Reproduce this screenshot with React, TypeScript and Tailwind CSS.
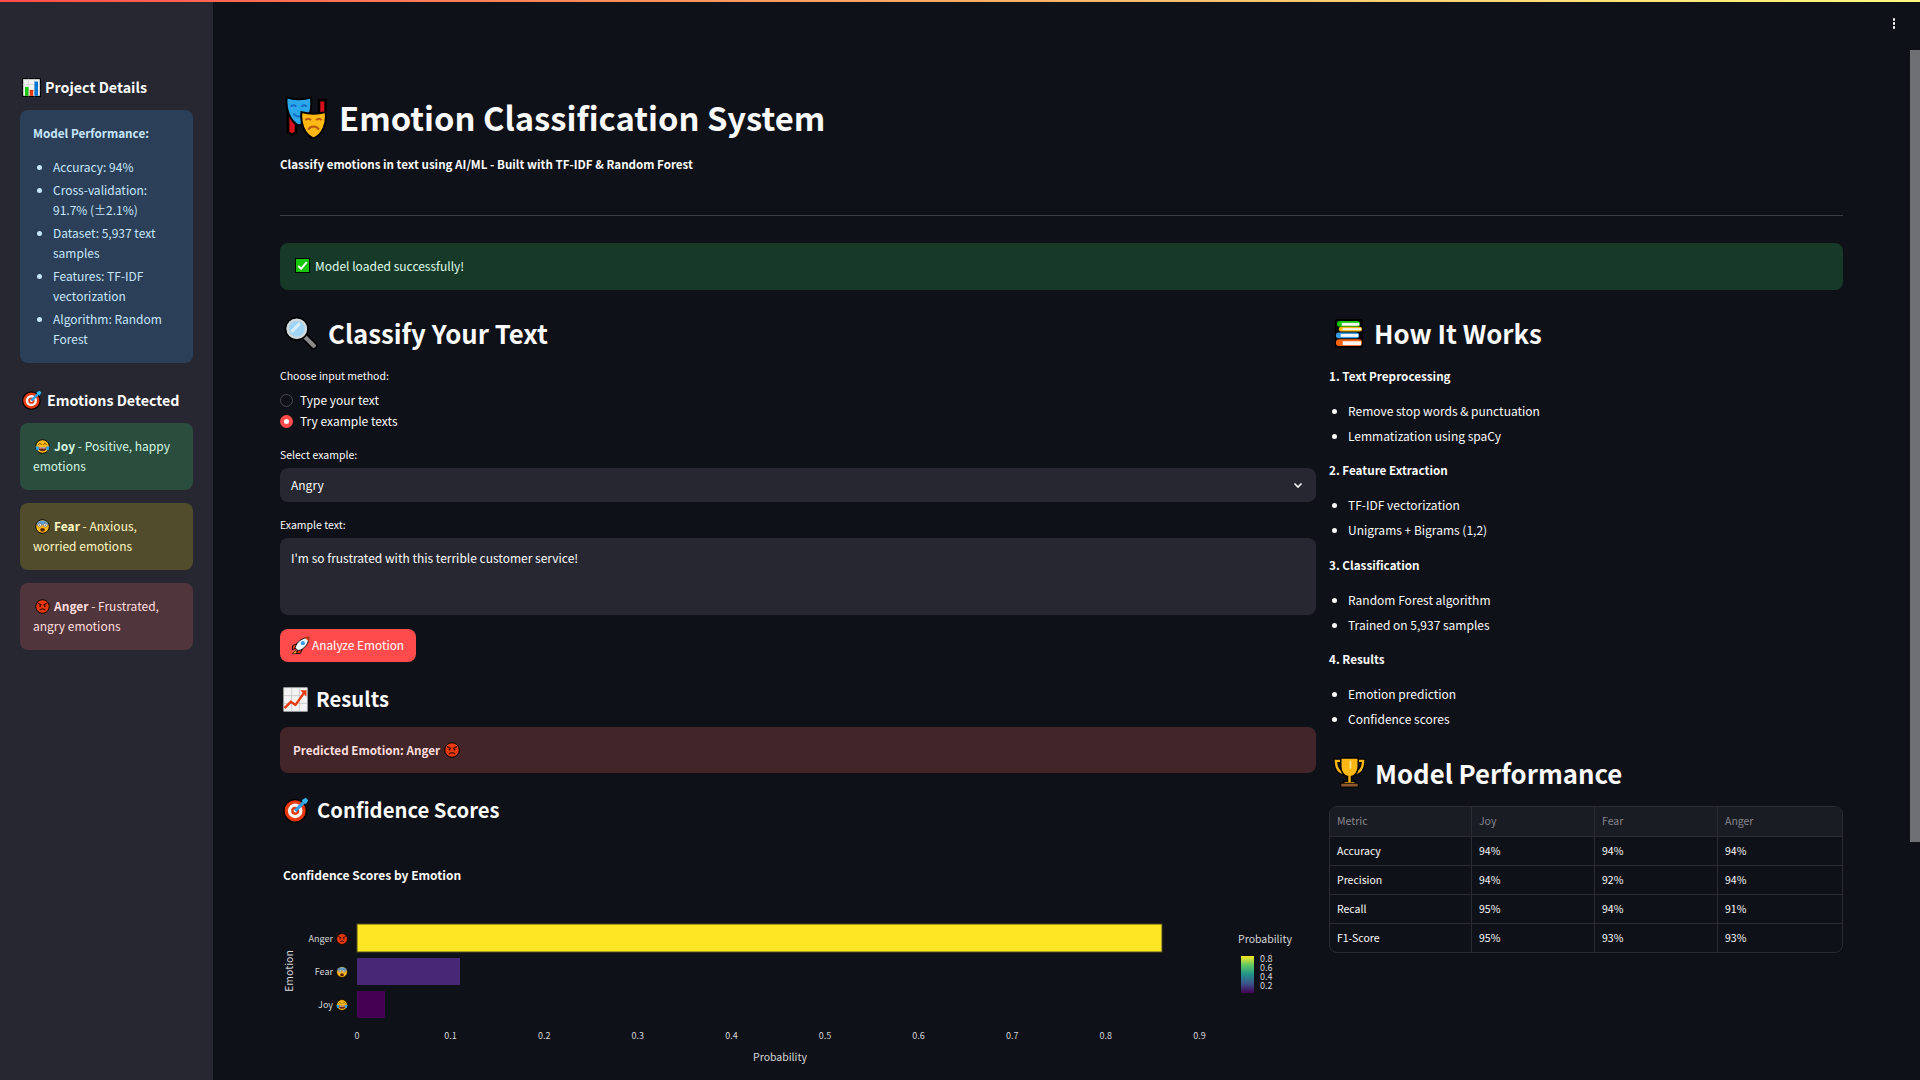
import type { ReactNode } from 'react';

const font = { fontFamily: '"Noto Sans CJK SC", "Noto Sans", sans-serif' };

const modelStats = [
  'Accuracy: 94%',
  'Cross-validation: 91.7% (±2.1%)',
  'Dataset: 5,937 text samples',
  'Features: TF-IDF vectorization',
  'Algorithm: Random Forest',
];

const steps = [
  { title: '1. Text Preprocessing', items: ['Remove stop words & punctuation', 'Lemmatization using spaCy'] },
  { title: '2. Feature Extraction', items: ['TF-IDF vectorization', 'Unigrams + Bigrams (1,2)'] },
  { title: '3. Classification', items: ['Random Forest algorithm', 'Trained on 5,937 samples'] },
  { title: '4. Results', items: ['Emotion prediction', 'Confidence scores'] },
];

const metrics = [
  ['Accuracy', '94%', '94%', '94%'],
  ['Precision', '94%', '92%', '94%'],
  ['Recall', '95%', '94%', '91%'],
  ['F1-Score', '95%', '93%', '93%'],
];

// windows style emoji, drawn by hand on a 32 grid with the black outline
const glyphs: Record<string, ReactNode> = {
  chart: (
    <>
      <rect x="1" y="1" width="30" height="30" fill="#f4f4f4" stroke="#000" strokeWidth="2" />
      <path d="M1 11h30M1 21h30M11 1v30M21 1v30" stroke="#c9c9c9" strokeWidth="1" />
      <rect x="5" y="15" width="6" height="15" fill="#16c60c" />
      <rect x="13" y="20" width="6" height="10" fill="#e8390e" />
      <rect x="21" y="6" width="6" height="24" fill="#0078d4" />
    </>
  ),
  target: (
    <>
      <circle cx="15" cy="17" r="14" fill="#e8390e" stroke="#000" strokeWidth="2" />
      <circle cx="15" cy="17" r="9" fill="#f6f6f6" />
      <circle cx="15" cy="17" r="5" fill="#e8390e" />
      <circle cx="15" cy="17" r="2" fill="#f6f6f6" />
      <path d="M15 17 27 5" stroke="#2b9fe8" strokeWidth="4" />
      <path d="M23 4l5-3 3 3-3 5z" fill="#35b6f5" />
    </>
  ),
  masks: (
    <>
      <path d="M3 12v15l3 2 3-2V16z" fill="#d6101c" stroke="#000" strokeWidth="2" />
      <path d="M26 3h5v11h-5z" fill="#d6101c" stroke="#000" strokeWidth="2" />
      <path d="M2 1c5 2 13 2 18 0 1 8 0 17-9 21C4 19 1 9 2 1z" fill="#2aa8ea" stroke="#000" strokeWidth="1.5" />
      <path d="M5 8c1-1.5 3-1.5 4 0M13 8c1-1.5 3-1.5 4 0M7 13c2 3 6 3 8 0" fill="none" stroke="#1469c7" strokeWidth="1.5" />
      <path d="M13 12c6 1.5 12 1.5 18 0 1 8-2 17-9 19.5-7-2.5-10-11.5-9-19.5z" fill="#fdb813" stroke="#000" strokeWidth="1.5" />
      <path d="M16 18c1-1.5 3-1.5 4 0M24 18c1-1.5 3-1.5 4 0M18 25c2-3 6-3 8 0" fill="none" stroke="#b85a0f" strokeWidth="1.5" />
    </>
  ),
  check: (
    <>
      <rect x="1" y="1" width="30" height="30" fill="#16c60c" stroke="#000" strokeWidth="2" />
      <path d="M7 17l6 6L25 9" fill="none" stroke="#fff" strokeWidth="4" />
    </>
  ),
  search: (
    <>
      <path d="M19 19l9 9" stroke="#000" strokeWidth="7" strokeLinecap="round" />
      <path d="M20 20l8 8" stroke="#8a8a8a" strokeWidth="4" strokeLinecap="round" />
      <circle cx="12" cy="12" r="10.5" fill="#9fd4f5" stroke="#000" strokeWidth="1.5" />
      <circle cx="12" cy="12" r="8.5" fill="#9fd4f5" stroke="#d8d8d8" strokeWidth="2" />
      <path d="M7 15 15 7" stroke="#d8eefb" strokeWidth="3" />
    </>
  ),
  books: (
    <>
      <rect x="2" y="1" width="29" height="30" rx="2" fill="#000" />
      <rect x="4" y="3" width="24" height="6" rx="3" fill="#16c60c" />
      <rect x="9" y="5" width="18" height="3" fill="#f6f6f6" />
      <rect x="6" y="9" width="24" height="5" rx="2.5" fill="#fdb813" />
      <rect x="10" y="10.5" width="19" height="2" fill="#f6f6f6" />
      <rect x="3" y="15" width="24" height="6" rx="3" fill="#3a9be8" />
      <rect x="8" y="16.5" width="18" height="3" fill="#f6f6f6" />
      <rect x="3" y="22" width="27" height="7" rx="3.5" fill="#f7630c" />
      <rect x="10" y="24" width="19" height="4" fill="#f6f6f6" />
    </>
  ),
  rocket: (
    <>
      <path d="M10 13l-7 3-1 7 8-3zM19 22l-3 7-7 1 3-8z" fill="#e8390e" stroke="#000" strokeWidth="1.5" />
      <path d="M8 24l-6 6 8-1z" fill="#fdb813" stroke="#000" strokeWidth="1" />
      <path d="M7 20C9 10 19 3 30 2c0 11-7 20-18 23z" fill="#eef7fc" stroke="#000" strokeWidth="1.5" />
      <path d="M23 2.5 30 2l-.5 7z" fill="#e8390e" />
      <circle cx="20" cy="12" r="3.5" fill="#3a9be8" />
    </>
  ),
  lineChart: (
    <>
      <rect x="1" y="1" width="30" height="30" fill="#f4f4f4" stroke="#cfcfcf" strokeWidth="1" />
      <path d="M1 11h30M1 21h30M11 1v30M21 1v30" stroke="#c4c4c4" strokeWidth="1" />
      <path d="M2 27l8-8 6 4L28 6" fill="none" stroke="#e8390e" strokeWidth="3" />
      <path d="M22 4h8v8z" fill="#e8390e" />
    </>
  ),
  trophy: (
    <>
      <path d="M8 4H2c0 8 3 12 9 13M24 4h6c0 8-3 12-9 13" fill="none" stroke="#000" strokeWidth="5" />
      <path d="M8 4H2c0 8 3 12 9 13M24 4h6c0 8-3 12-9 13" fill="none" stroke="#fdb813" strokeWidth="2.5" />
      <path d="M7 1h18v9c0 6-4 10-7 10v5h4v3H10v-3h4v-5c-3 0-7-4-7-10z" fill="#fdb813" stroke="#000" strokeWidth="1.5" />
      <path d="M17 4v8" stroke="#ffe28a" strokeWidth="2" />
      <rect x="7" y="27" width="18" height="4" fill="#8e562e" stroke="#000" strokeWidth="1" />
    </>
  ),
  joy: (
    <>
      <circle cx="16" cy="16" r="14.5" fill="#fdb813" stroke="#000" strokeWidth="2" />
      <path d="M7 12c2-3 5-3 7 0M18 12c2-3 5-3 7 0" fill="none" stroke="#5b3a0e" strokeWidth="2" />
      <path d="M7 17h18c0 6-4 9-9 9s-9-3-9-9z" fill="#6b2410" />
      <path d="M9 18h14v2H9z" fill="#fff" />
      <path d="M1 16h7v8H3zM31 16h-7v8h5z" fill="#35a6ec" />
    </>
  ),
  fear: (
    <>
      <circle cx="16" cy="16" r="14.5" fill="#fdb813" stroke="#000" strokeWidth="2" />
      <path d="M3 12a14 14 0 0 1 26 0z" fill="#5f9fd8" />
      <circle cx="10" cy="13" r="4" fill="#fff" stroke="#333" strokeWidth="1" />
      <circle cx="22" cy="13" r="4" fill="#fff" stroke="#333" strokeWidth="1" />
      <circle cx="10" cy="13" r="1.5" fill="#222" />
      <circle cx="22" cy="13" r="1.5" fill="#222" />
      <ellipse cx="16" cy="23" rx="5" ry="4" fill="#5b2410" />
    </>
  ),
  anger: (
    <>
      <circle cx="16" cy="16" r="14.5" fill="#e8390e" stroke="#000" strokeWidth="2" />
      <path d="M6 9l8 4M26 9l-8 4" stroke="#3a0d04" strokeWidth="2.5" />
      <circle cx="11" cy="15" r="2" fill="#3a0d04" />
      <circle cx="21" cy="15" r="2" fill="#3a0d04" />
      <path d="M10 24c3-4 9-4 12 0" fill="none" stroke="#3a0d04" strokeWidth="2.5" />
    </>
  ),
};

function Emoji({ name, size, className, x, y }: { name: string; size: number; className?: string; x?: number; y?: number }) {
  return (
    <svg x={x} y={y} width={size} height={size} viewBox="0 0 32 32" className={className}>
      {glyphs[name]}
    </svg>
  );
}

function Chart() {
  const ticks = ['0', '0.1', '0.2', '0.3', '0.4', '0.5', '0.6', '0.7', '0.8', '0.9'];
  return (
    <svg viewBox="280 826 1036 254" className="block h-[254px] w-[1036px]" style={font}>
      <defs>
        <linearGradient id="viridis" x1="0" y1="1" x2="0" y2="0">
          <stop offset="0" stopColor="#440154" />
          <stop offset="0.25" stopColor="#3b528b" />
          <stop offset="0.5" stopColor="#21908c" />
          <stop offset="0.75" stopColor="#5dc863" />
          <stop offset="1" stopColor="#fde725" />
        </linearGradient>
      </defs>
      <text x="283" y="880" fontSize="12" fontWeight="700" fill="#fafafa">Confidence Scores by Emotion</text>
      <rect x="357" y="924" width="805" height="28" fill="#fde725" stroke="#4d4a1f" strokeWidth="1" />
      <rect x="357" y="958" width="103" height="27" fill="#472776" />
      <rect x="357" y="991" width="28" height="27" fill="#440154" />
      <text x="333" y="942" fontSize="9" fill="#d5d6d8" textAnchor="end">Anger</text>
      <text x="333" y="975" fontSize="9" fill="#d5d6d8" textAnchor="end">Fear</text>
      <text x="333" y="1008" fontSize="9" fill="#d5d6d8" textAnchor="end">Joy</text>
      <Emoji name="anger" size={12} x={336} y={933} />
      <Emoji name="fear" size={12} x={336} y={966} />
      <Emoji name="joy" size={12} x={336} y={999} />
      <text x="293" y="971" fontSize="10.5" fill="#d5d6d8" textAnchor="middle" transform="rotate(-90 293 971)">Emotion</text>
      {ticks.map((t, i) => (
        <text key={t} x={357 + i * 93.6} y="1039" fontSize="9" fill="#d5d6d8" textAnchor="middle">{t}</text>
      ))}
      <text x="780" y="1061" fontSize="10.5" fill="#d5d6d8" textAnchor="middle">Probability</text>
      <text x="1265" y="943" fontSize="10.5" fill="#d5d6d8" textAnchor="middle">Probability</text>
      <rect x="1241" y="956" width="13" height="37" fill="url(#viridis)" />
      {['0.8', '0.6', '0.4', '0.2'].map((t, i) => (
        <text key={t} x="1260" y={962 + i * 9} fontSize="9" fill="#d5d6d8">{t}</text>
      ))}
    </svg>
  );
}

function SideCard({ emoji, name, text, tone }: { emoji: string; name: string; text: string; tone: string }) {
  return (
    <div className={`h-[67px] w-[173px] rounded-lg px-[13px] pt-[13px] ${tone}`}>
      <Emoji name={emoji} size={15} className="mr-[4px] ml-[2px] inline-block align-[-3px]" />
      <b className="font-semibold">{name}</b> - {text}
    </div>
  );
}

export default function App() {
  return (
    <div className="relative h-[1080px] w-[1920px] overflow-hidden bg-[#0e1117] text-[12px] leading-[20px] text-[#fafafa]" style={font}>
      <div className="h-[2px] bg-gradient-to-r from-[#ff4b4b] to-[#fffd80]" />

      {/* menu + scrollbar */}
      <div className="absolute right-[25px] top-[18px] flex flex-col gap-[1.5px]">
        <span className="h-[2.5px] w-[2.5px] rounded-full bg-white" />
        <span className="h-[2.5px] w-[2.5px] rounded-full bg-white" />
        <span className="h-[2.5px] w-[2.5px] rounded-full bg-white" />
      </div>
      <div className="absolute right-0 top-[50px] h-[792px] w-[10px] bg-[#6f7073]" />

      <div className="flex h-[1078px]">
        {/* Sidebar */}
        <aside className="w-[213px] shrink-0 bg-[#262730] px-[20px]">
          <h3 className="mt-[73px] flex items-center text-[14.25px] font-semibold leading-[24px]">
            <Emoji name="chart" size={19} className="mr-[4px] ml-[2px]" />
            Project Details
          </h3>
          <div className="mt-[11px] h-[253px] w-[173px] rounded-lg bg-[#2b3f58] p-[13px] text-[#c7e6fb]">
            <p className="text-[11.7px] font-semibold">Model Performance:</p>
            <ul className="mt-[14px] list-disc space-y-[3px] pl-[20px]">
              {modelStats.map((s) => <li key={s}>{s}</li>)}
            </ul>
          </div>
          <h3 className="mt-[25px] flex items-center text-[14.25px] font-semibold leading-[24px]">
            <Emoji name="target" size={20} className="mr-[5px] ml-[2px]" />
            Emotions Detected
          </h3>
          <SideCard emoji="joy" name="Joy" text="Positive, happy emotions" tone="mt-[11px] bg-[#2a4d3e] text-[#d5f5e0]" />
          <SideCard emoji="fear" name="Fear" text="Anxious, worried emotions" tone="mt-[13px] bg-[#514d2c] text-[#fff6c2]" />
          <SideCard emoji="anger" name="Anger" text="Frustrated, angry emotions" tone="mt-[13px] bg-[#51353c] text-[#ffdfdf]" />
        </aside>

        {/* Main */}
        <main className="flex-1 pl-[67px] pr-[77px]">
          <h1 className="mt-[91px] flex h-[50px] items-center pb-[2px] text-[32.75px] font-semibold leading-[48px]">
            <Emoji name="masks" size={43} className="mr-[12px] ml-[4px]" />
            Emotion Classification System
          </h1>
          <p className="mt-[11px] text-[11.6px] font-semibold">Classify emotions in text using AI/ML - Built with TF-IDF &amp; Random Forest</p>
          <hr className="mt-[41px] h-px border-0 bg-[#3d3e45]" />
          <div className="mt-[27px] flex h-[47px] items-center rounded-lg bg-[#173928] px-[15px] pb-[2px] text-[#dffde9]">
            <Emoji name="check" size={15} className="mr-[5px]" />
            Model loaded successfully!
          </div>

          <div className="flex gap-[13px]">
            <section className="w-[1036px] shrink-0">
              <h2 className="mt-[24px] flex h-[40px] items-center pb-[2px] text-[25.75px] font-semibold leading-[38px]">
                <Emoji name="search" size={34} className="mr-[10px] ml-[4px]" />
                Classify Your Text
              </h2>
              <label className="mt-[14px] block text-[10.5px] leading-[16px]">Choose input method:</label>
              <div className="mt-[6px] flex h-[20px] items-center gap-[7px]">
                <span className="h-[13px] w-[13px] rounded-full border border-[#4a4b52] bg-[#0e1117]" />
                Type your text
              </div>
              <div className="mt-[1px] flex h-[20px] items-center gap-[7px]">
                <span className="flex h-[13px] w-[13px] items-center justify-center rounded-full bg-[#ff4b4b]">
                  <span className="h-[5px] w-[5px] rounded-full bg-white" />
                </span>
                Try example texts
              </div>
              <label className="mt-[16px] block text-[10.5px] leading-[16px]">Select example:</label>
              <div className="mt-[5px] flex h-[34px] items-center justify-between rounded-lg bg-[#262730] pl-[11px] pr-[12px]">
                <span>Angry</span>
                <svg width="12" height="12" viewBox="0 0 12 12" fill="none" stroke="#fafafa" strokeWidth="1.6"><path d="M2.5 4.5 6 8l3.5-3.5" /></svg>
              </div>
              <label className="mt-[15px] block text-[10.5px] leading-[16px]">Example text:</label>
              <div className="mt-[5px] h-[77px] rounded-lg bg-[#262730] px-[11px] py-[10px]">I'm so frustrated with this terrible customer service!</div>
              <button className="mt-[14px] flex h-[33px] w-[136px] items-center rounded-lg bg-[#ff4b4b] pb-[1px] pl-[11px] text-[11.85px] text-white">
                <Emoji name="rocket" size={19} className="mr-[2px]" />
                Analyze Emotion
              </button>
              <h3 className="mt-[21px] flex items-center text-[20.25px] font-semibold leading-[32px]">
                <Emoji name="lineChart" size={25} className="mr-[8px] ml-[3px]" />
                Results
              </h3>
              <div className="mt-[12px] flex h-[46px] items-center rounded-lg bg-[#412529] px-[13px] text-[11.7px] font-semibold text-[#ffdede]">
                Predicted Emotion: Anger
                <Emoji name="anger" size={16} className="ml-[4px]" />
              </div>
              <h3 className="mt-[21px] flex items-center text-[20.25px] font-semibold leading-[32px]">
                <Emoji name="target" size={26} className="mr-[8px] ml-[3px]" />
                Confidence Scores
              </h3>
              <Chart />
            </section>

            <section className="w-[514px] shrink-0">
              <h2 className="mt-[24px] flex h-[40px] items-center pb-[2px] text-[25.75px] font-semibold leading-[38px]">
                <Emoji name="books" size={31} className="mr-[10px] ml-[4px]" />
                How It Works
              </h2>
              <div className="mt-[12px] space-y-[14.33px]">
                {steps.map((step) => (
                  <div key={step.title}>
                    <p className="text-[11.7px] font-semibold">{step.title}</p>
                    <ul className="mt-[15px] list-disc space-y-[5px] pl-[19px]">
                      {step.items.map((item) => <li key={item}>{item}</li>)}
                    </ul>
                  </div>
                ))}
              </div>
              <h2 className="mt-[24px] flex items-center text-[25.75px] font-semibold leading-[40px]">
                <Emoji name="trophy" size={31} className="mr-[10px] ml-[5px]" />
                Model Performance
              </h2>
              <div className="mt-[13px] overflow-hidden rounded-lg border border-[#2a2b33] text-[10.5px]">
                <div className="grid h-[29px] grid-cols-[142px_123px_123px_1fr] items-stretch bg-[#1a1c24] text-[#84858a]">
                  {['Metric', 'Joy', 'Fear', 'Anger'].map((h) => (
                    <div key={h} className="flex items-center border-r border-[#2a2b33] px-[7px] last:border-r-0">{h}</div>
                  ))}
                </div>
                {metrics.map((row) => (
                  <div key={row[0]} className="grid h-[29px] grid-cols-[142px_123px_123px_1fr] border-t border-[#2a2b33]">
                    {row.map((cell, i) => (
                      <div key={i} className="flex items-center border-r border-[#2a2b33] px-[7px] last:border-r-0">{cell}</div>
                    ))}
                  </div>
                ))}
              </div>
            </section>
          </div>
        </main>
      </div>
    </div>
  );
}
